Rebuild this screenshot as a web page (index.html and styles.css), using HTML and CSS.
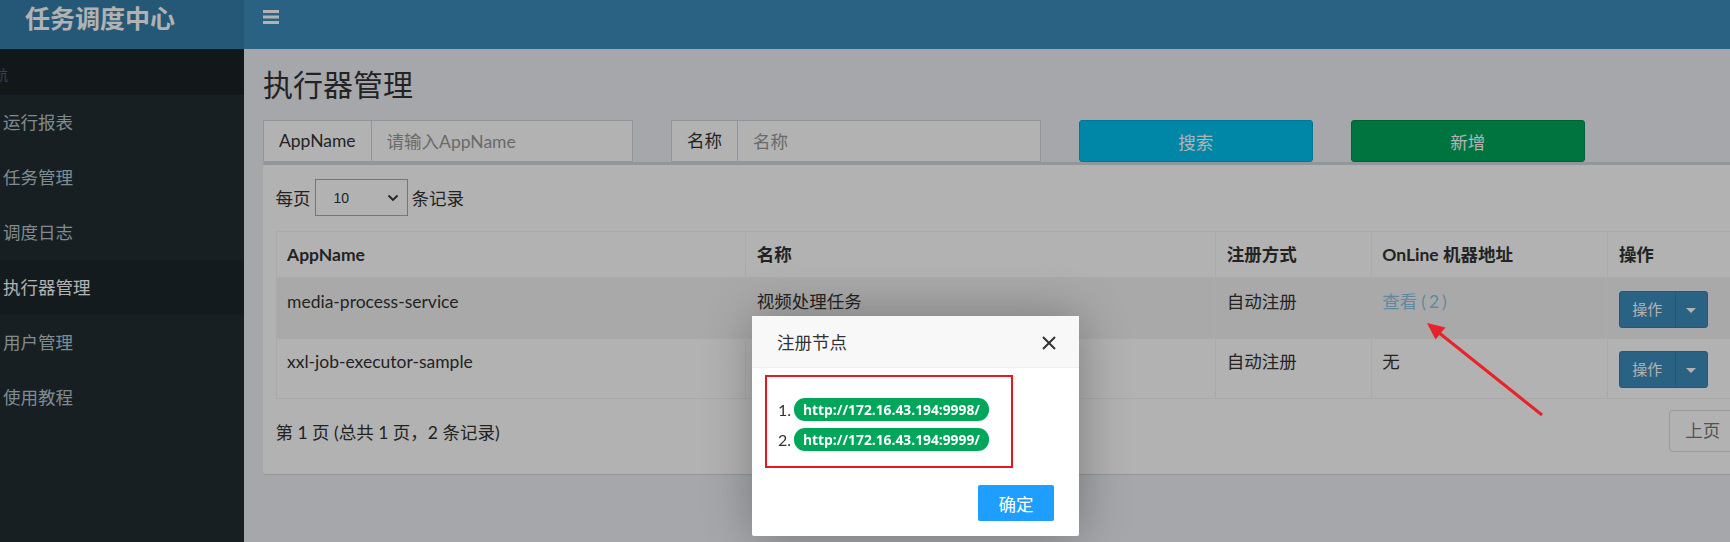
FILE: index.html
```html
<!DOCTYPE html>
<html lang="zh-CN">
<head>
<meta charset="utf-8">
<title>任务调度中心 - 执行器管理</title>
<link rel="stylesheet" href="styles.css">
</head>
<body>
<div class="page">
  <header class="main-header">
    <div class="logo">任务调度中心</div>
    <nav class="navbar">
      <span class="toggle" aria-label="menu">
        <svg width="16" height="14" viewBox="0 0 16 14"><rect x="0" y="0" width="16" height="3" fill="#fff"/><rect x="0" y="5.5" width="16" height="3" fill="#fff"/><rect x="0" y="11" width="16" height="3" fill="#fff"/></svg>
      </span>
    </nav>
  </header>
  <div class="main-row">
    <aside class="sidebar">
      <div class="sidebar-header"><span class="sh-text">导航</span></div>
      <ul class="menu">
        <li class="menu-item">运行报表</li>
        <li class="menu-item">任务管理</li>
        <li class="menu-item">调度日志</li>
        <li class="menu-item active">执行器管理</li>
        <li class="menu-item">用户管理</li>
        <li class="menu-item">使用教程</li>
      </ul>
    </aside>
    <main class="content">
      <h1 class="page-title">执行器管理</h1>
      <div class="search-row">
        <div class="input-group">
          <span class="addon">AppName</span>
          <input class="form-input" type="text" placeholder="请输入AppName">
        </div>
        <div class="input-group">
          <span class="addon">名称</span>
          <input class="form-input" type="text" placeholder="名称">
        </div>
        <button class="btn btn-info">搜索</button>
        <button class="btn btn-success">新增</button>
      </div>
      <section class="box">
        <div class="length-row">
          <span>每页</span>
          <div class="select">
            <span class="select-val">10</span>
            <svg width="12" height="8" viewBox="0 0 12 8"><path d="M1.5 1.5 L6 6 L10.5 1.5" fill="none" stroke="#333" stroke-width="1.8"/></svg>
          </div>
          <span>条记录</span>
        </div>
        <table class="table">
          <colgroup>
            <col class="c1"><col class="c2"><col class="c3"><col class="c4"><col class="c5">
          </colgroup>
          <thead>
            <tr><th>AppName</th><th>名称</th><th>注册方式</th><th>OnLine 机器地址</th><th>操作</th></tr>
          </thead>
          <tbody>
            <tr class="odd">
              <td>media-process-service</td>
              <td>视频处理任务</td>
              <td>自动注册</td>
              <td><a class="link">查看<span class="cnt">(2)</span></a></td>
              <td><div class="btn-split"><span class="bs-main">操作</span><span class="bs-caret"></span></div></td>
            </tr>
            <tr>
              <td>xxl-job-executor-sample</td>
              <td>示例执行器</td>
              <td>自动注册</td>
              <td>无</td>
              <td><div class="btn-split"><span class="bs-main">操作</span><span class="bs-caret"></span></div></td>
            </tr>
          </tbody>
        </table>
        <div class="pager-row">
          <span class="pager-info">第 1 页 (总共 1 页，2 条记录)</span>
          <ul class="pagination">
            <li>上页</li>
            <li class="cur">1</li>
            <li>下页</li>
          </ul>
        </div>
      </section>
    </main>
  </div>
</div>

<div class="backdrop"></div>

<div class="modal">
  <div class="modal-title">
    <span>注册节点</span>
    <svg class="close" width="14" height="14" viewBox="0 0 14 14"><path d="M1 1 L13 13 M13 1 L1 13" stroke="#333" stroke-width="2" fill="none"/></svg>
  </div>
  <div class="modal-body">
    <div class="node"><span class="num">1.</span><span class="pill">http://172.16.43.194:9998/</span></div>
    <div class="node"><span class="num">2.</span><span class="pill">http://172.16.43.194:9999/</span></div>
    <div class="mark"></div>
  </div>
  <div class="modal-foot"><button class="ok">确定</button></div>
</div>

<svg class="arrow" width="140" height="110" viewBox="0 0 140 110">
  <line x1="122" y1="100" x2="18" y2="17" stroke="#e8222a" stroke-width="3"/>
  <polygon points="7,8 25.5,12.5 15.5,24.5" fill="#e8222a"/>
</svg>
</body>
</html>
```

FILE: styles.css
```css
* { box-sizing: border-box; }
html, body { margin: 0; padding: 0; }
body {
  width: 1730px;
  height: 542px;
  overflow: hidden;
  font-family: "Lato", "Noto Sans CJK SC", sans-serif;
  color: #333;
  background: #ecf0f5;
}
.page { width: 1874px; height: 542px; display: flex; flex-direction: column; }

.main-header { display: flex; height: 49px; flex: none; }
.logo {
  width: 244px; flex: none;
  background: #367fa9; color: #fff;
  font-weight: bold; font-size: 25px; line-height: 34px;
  padding-left: 25px;
  font-family: "Noto Sans CJK SC", sans-serif;
}
.navbar { flex: 1; background: #3c8dbc; padding: 10px 0 0 19px; }
.toggle { display: block; width: 16px; height: 14px; }
.toggle svg { display: block; }

.main-row { flex: 1; display: flex; min-height: 0; }
.sidebar { width: 244px; flex: none; background: #222d32; }
.sidebar-header { height: 46px; background: #1a2226; overflow: hidden; padding-top: 15px; }
.sh-text { display: inline-block; margin-left: -20px; font-size: 14px; color: #4b646f; line-height: 16px; }
.menu { list-style: none; margin: 0; padding: 0; }
.menu-item {
  height: 55px; line-height: 55px; padding-left: 3px;
  font-size: 17.5px; color: #b8c7ce;
}
.menu-item.active { background: #1e282c; color: #fff; }

.content { flex: 1; padding: 19px 19px 0; }
.page-title { margin: 0; font-size: 30px; font-weight: normal; line-height: 33px; height: 33px; }

.search-row {
  margin-top: 19px;
  display: grid;
  grid-template-columns: 369.5px 369.5px 233.5px 233.5px;
  column-gap: 38.5px;
  height: 42px;
}
.input-group { display: flex; border: 1px solid #d2d6de; background: #fff; }
.addon {
  padding: 0 15px; border-right: 1px solid #d2d6de;
  font-size: 17.5px; line-height: 40px; color: #333; background: #fff;
}
.form-input {
  flex: 1; min-width: 0; border: 0; outline: 0; padding: 0 15px;
  font: inherit; font-size: 17.5px; color: #555; background: #fff;
}
.form-input::placeholder { color: #999; }
.btn {
  border-radius: 3px; font: inherit; font-size: 17.5px; color: #fff; cursor: pointer;
}
.btn-info { background: #00c0ef; border: 1px solid #00acd6; }
.btn-success { background: #00a65a; border: 1px solid #008d4c; }

.box {
  margin-top: 0;
  background: #fff;
  border-top: 3px solid #d2d6de;
  border-radius: 3px;
  box-shadow: 0 1px 1px rgba(0,0,0,0.1);
  padding: 14px 12.5px 22px;
}
.length-row { display: flex; align-items: center; font-size: 17.5px; height: 37px; }
.select {
  width: 93px; height: 37px; margin: 0 4px;
  border: 1px solid #aaa;
  display: flex; align-items: center; justify-content: space-between;
  padding: 0 8px 0 18px;
}
.select-val { font-size: 14px; font-family: "Liberation Sans", sans-serif; }
.select svg { display: block; }

.table {
  margin-top: 15px;
  width: 100%;
  table-layout: fixed;
  border-collapse: collapse;
  border: 1px solid #f4f4f4;
  font-size: 17.5px;
}
.c1 { width: 469.7px; } .c2 { width: 470.1px; } .c3 { width: 155.5px; } .c4 { width: 236.6px; } .c5 { width: 235px; }
.table th, .table td {
  border: 1px solid #f4f4f4;
  text-align: left;
  padding: 10px 10.5px;
  line-height: 25px;
}
.table th { font-weight: bold; height: 46px; border-bottom-width: 2px; }
.table td { vertical-align: top; height: 60px; }
.table tr.odd td { background: #f3f3f3; }
.link { color: #8cc4e6; }
.cnt { letter-spacing: 3px; margin-left: 4px; }

.btn-split { display: flex; width: 89px; height: 37px; margin-top: 2px; border-radius: 3px; overflow: hidden; border: 1px solid #367fa9; background: #3c8dbc; }
.bs-main { width: 56px; color: #fff; font-size: 15px; text-align: center; line-height: 35px; border-right: 1px solid #367fa9; }
.bs-caret { flex: 1; position: relative; }
.bs-caret::after {
  content: ""; position: absolute; left: 50%; top: 50%; margin: -2px 0 0 -5px;
  border-left: 5px solid transparent; border-right: 5px solid transparent; border-top: 5px solid #fff;
}

.pager-row { margin-top: 11px; display: flex; justify-content: space-between; align-items: center; height: 42px; }
.pager-info { font-size: 17.5px; }
.pagination { list-style: none; margin: 0; padding: 0; display: flex; }
.pagination li {
  height: 42px; line-height: 40px; padding: 0 15px;
  border: 1px solid #ddd; margin-left: -1px; font-size: 17.5px; color: #777;
}
.pagination li:first-child { border-radius: 4px 0 0 4px; }
.pagination li.cur { background: #337ab7; color: #fff; border-color: #337ab7; }

.backdrop { position: fixed; inset: 0; background: rgba(0,0,0,0.3); }

.modal {
  position: absolute; left: 752px; top: 316px; width: 327px; height: 220px;
  background: #fff; border-radius: 2px;
  box-shadow: 1px 1px 50px rgba(0,0,0,0.3);
  font-family: "Noto Sans CJK SC", sans-serif;
}
.modal-title {
  height: 52px; background: #f8f8f8; border-bottom: 1px solid #eee;
  display: flex; align-items: center; justify-content: space-between;
  padding: 0 23px 0 25px; font-size: 17.5px; color: #333;
}
.close { display: block; margin-top: 3px; }
.modal-body { position: relative; padding: 30px 0 0 26px; height: 117px; }
.node { display: flex; align-items: center; height: 23px; margin-bottom: 7px; }
.num { width: 16px; font-size: 16px; color: #333; font-family: "Lato", sans-serif; }
.pill {
  height: 23px; line-height: 23px; padding: 0 9px; border-radius: 11px;
  background: #00a65a; color: #fff; font-weight: bold; font-size: 13.8px;
  font-family: "Open Sans", sans-serif;
}
.mark { position: absolute; left: 13px; top: 7px; width: 248px; height: 93px; border: 2px solid #e8161f; }
.modal-foot { display: flex; justify-content: flex-end; padding: 0 25px; }
.ok {
  width: 76px; height: 36px; border: 0; border-radius: 2px;
  background: #1e9fff; color: #fff; font-size: 17.5px; font-family: "Noto Sans CJK SC", sans-serif;
}
.arrow { position: absolute; left: 1420px; top: 315px; }
```
